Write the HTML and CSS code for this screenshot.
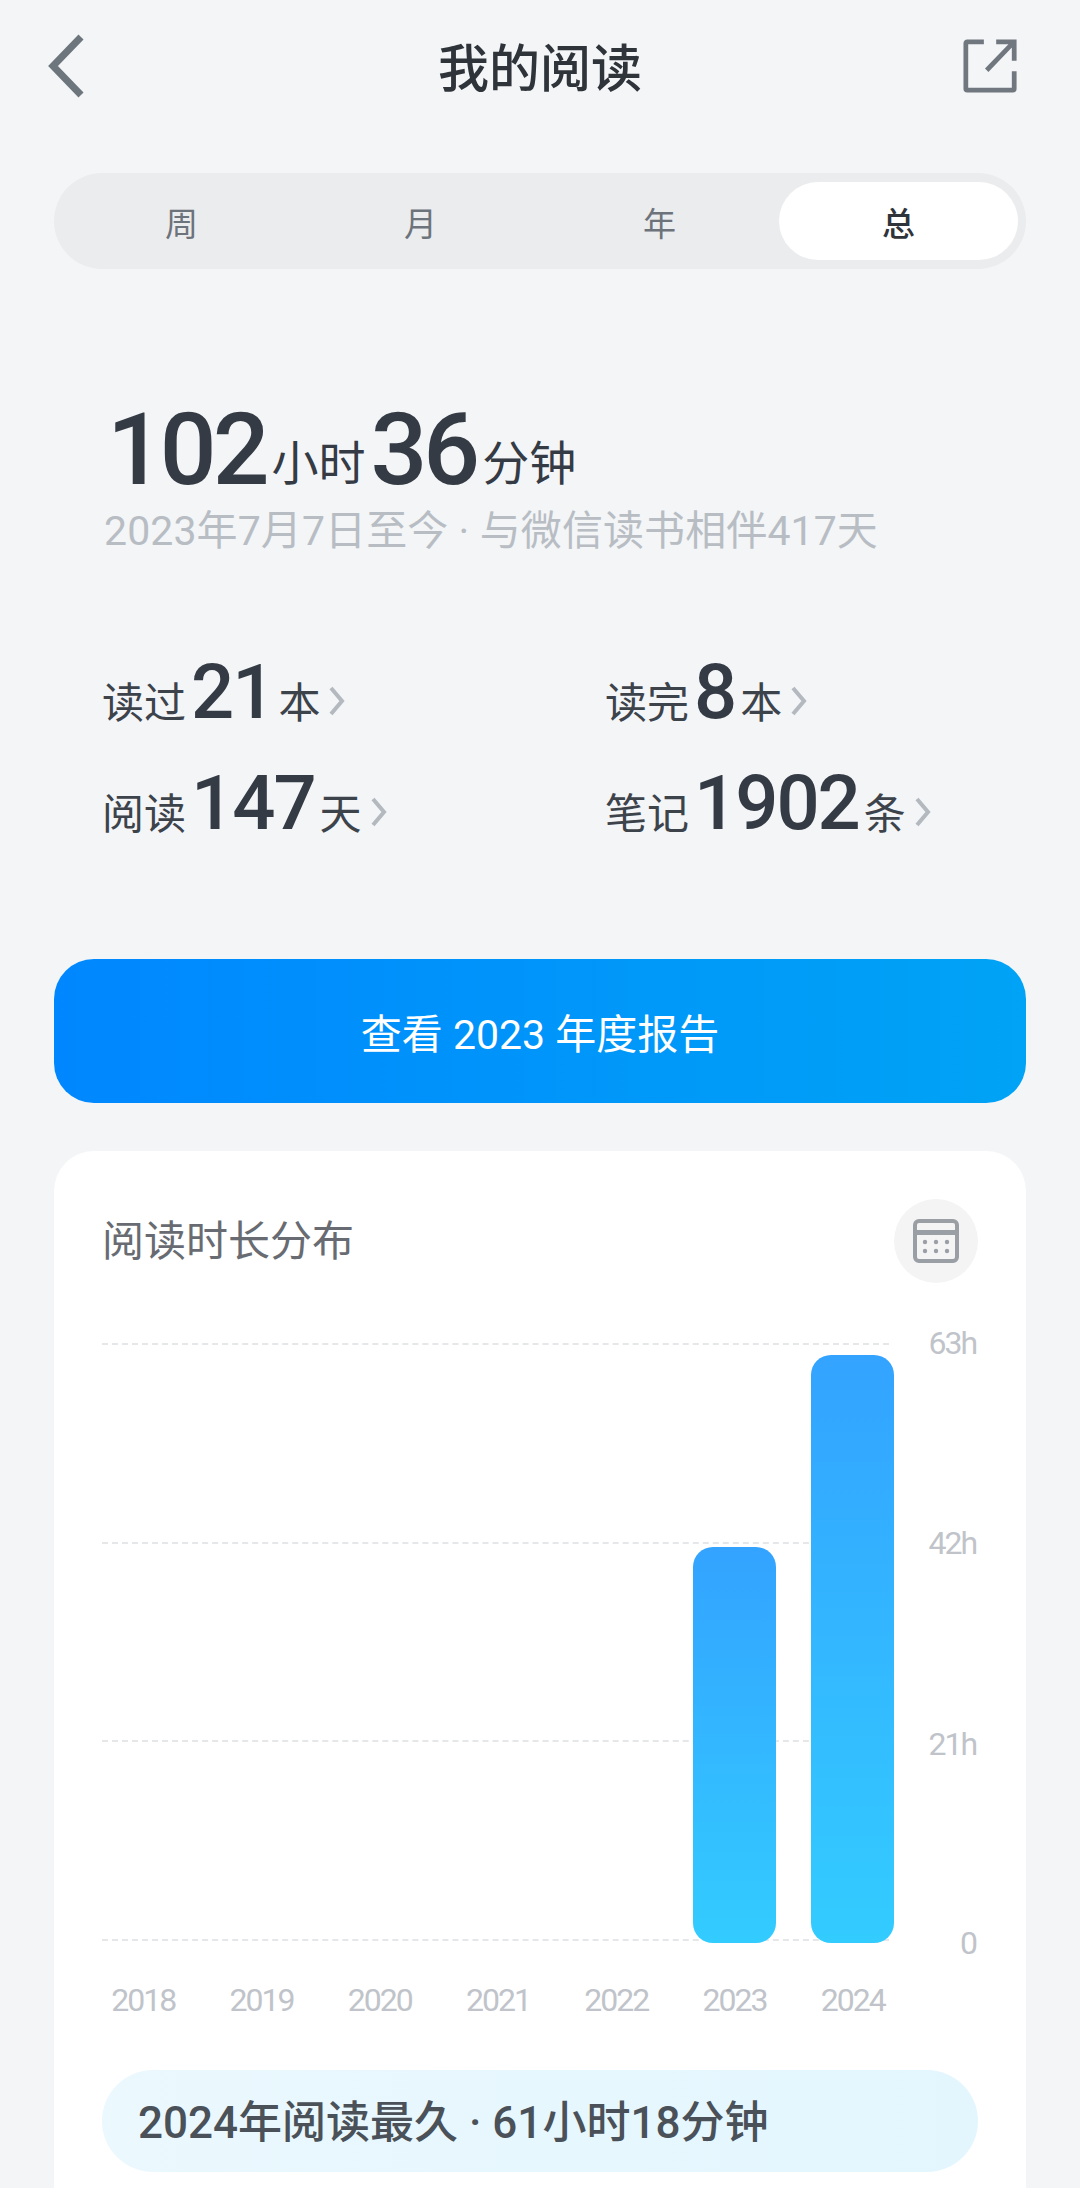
FILE: index.html
```html
<!DOCTYPE html>
<html lang="zh-CN">
<head>
<meta charset="utf-8">
<title>我的阅读</title>
<link rel="stylesheet" href="styles.css">
</head>
<body>
<div class="page">
  <header class="nav">
    <svg class="nav-back" viewBox="0 0 40 64" width="40" height="64"><path d="M34 3 6 32l28 29" fill="none" stroke="#6d757d" stroke-width="7"/></svg>
    <h1 class="nav-title">我的阅读</h1>
    <svg class="nav-share" viewBox="0 0 58 58" width="55" height="55"><path d="M22 4H4.500a1.500 1.500 0 0 0-1.500 1.500v48a1.500 1.500 0 0 0 1.500 1.500h48a1.500 1.500 0 0 0 1.500-1.500V35M35 4h19v20M25 34 52 6" fill="none" stroke="#70777f" stroke-width="5"/></svg>
  </header>

  <nav class="tabs">
    <div class="tab">周</div>
    <div class="tab">月</div>
    <div class="tab">年</div>
    <div class="tab tab-active">总</div>
  </nav>

  <section class="hero">
    <div class="time"><span class="time-num">102</span><span class="time-unit">小时</span><span class="time-num time-num-second">36</span><span class="time-unit">分钟</span></div>
    <p class="since">2023年7月7日至今 · 与微信读书相伴417天</p>
  </section>

  <section class="stats">
    <div class="stat"><span class="stat-label">读过</span><span class="stat-num">21</span><span class="stat-unit">本</span><svg class="stat-arrow" viewBox="0 0 18 30" width="18" height="30"><path d="M3 2l11 13L3 28" fill="none" stroke="#b4b9c0" stroke-width="4"/></svg></div>
    <div class="stat"><span class="stat-label">读完</span><span class="stat-num">8</span><span class="stat-unit">本</span><svg class="stat-arrow" viewBox="0 0 18 30" width="18" height="30"><path d="M3 2l11 13L3 28" fill="none" stroke="#b4b9c0" stroke-width="4"/></svg></div>
    <div class="stat"><span class="stat-label">阅读</span><span class="stat-num">147</span><span class="stat-unit">天</span><svg class="stat-arrow" viewBox="0 0 18 30" width="18" height="30"><path d="M3 2l11 13L3 28" fill="none" stroke="#b4b9c0" stroke-width="4"/></svg></div>
    <div class="stat"><span class="stat-label">笔记</span><span class="stat-num">1902</span><span class="stat-unit">条</span><svg class="stat-arrow" viewBox="0 0 18 30" width="18" height="30"><path d="M3 2l11 13L3 28" fill="none" stroke="#b4b9c0" stroke-width="4"/></svg></div>
  </section>

  <button class="report">查看 2023 年度报告</button>

  <section class="card">
    <div class="card-head">
      <h2 class="card-title">阅读时长分布</h2>
      <div class="cal">
        <svg viewBox="0 0 46 44" width="46" height="44">
          <rect x="2" y="2" width="42" height="40" rx="4" fill="none" stroke="#9a9fa6" stroke-width="4"/>
          <rect x="2" y="11" width="42" height="5" fill="#9a9fa6"/>
          <g fill="#9a9fa6"><circle cx="12" cy="23" r="2.200"/><circle cx="23" cy="23" r="2.200"/><circle cx="34" cy="23" r="2.200"/><circle cx="12" cy="32" r="2.200"/><circle cx="23" cy="32" r="2.200"/><circle cx="34" cy="32" r="2.200"/></g>
        </svg>
      </div>
    </div>

    <div class="chart">
      <div class="grid">
        <div class="grid-row"><i class="grid-line"></i><span class="grid-val">63h</span></div>
        <div class="grid-row"><i class="grid-line"></i><span class="grid-val">42h</span></div>
        <div class="grid-row"><i class="grid-line"></i><span class="grid-val">21h</span></div>
        <div class="grid-row"><i class="grid-line"></i><span class="grid-val">0</span></div>
      </div>
      <div class="cols">
        <div class="col"><span class="year">2018</span></div>
        <div class="col"><span class="year">2019</span></div>
        <div class="col"><span class="year">2020</span></div>
        <div class="col"><span class="year">2021</span></div>
        <div class="col"><span class="year">2022</span></div>
        <div class="col"><i class="bar" style="height:396px"></i><span class="year">2023</span></div>
        <div class="col"><i class="bar" style="height:588px"></i><span class="year">2024</span></div>
      </div>
    </div>

    <div class="best">2024年阅读最久 · 61小时18分钟</div>
  </section>
</div>
</body>
</html>
```

FILE: styles.css
```css
* { box-sizing: border-box; }
html, body { margin: 0; padding: 0; }
body {
  background: #f3f5f7;
  font-family: Roboto, "Noto Sans CJK SC", sans-serif;
  color: #353b44;
}
.page { width: 1080px; height: 2188px; overflow: hidden; padding: 0 54px; }

.nav { height: 134px; display: flex; align-items: center; justify-content: space-between; position: relative; margin: 0 -54px; padding: 0 62px 3px 47px; }
.nav-title { position: absolute; left: 0; right: 0; top: 3px; margin: 0; text-align: center; font-size: 51px; line-height: 134px; font-weight: 500; color: #2f343b; }

.tabs { margin-top: 39px; height: 96px; border-radius: 48px; background: #ebecee; padding: 9px 8px; display: flex; }
.tab { flex: 1; height: 78px; border-radius: 39px; text-align: center; font-size: 33px; line-height: 86px; color: #6d737b; }
.tab-active { background: #fff; color: #2f343b; font-weight: 500; }

.hero { padding: 128px 0 0 48px; }
.time { height: 106px; line-height: 106px; padding-left: 5px; white-space: nowrap; }
.time-num { font-size: 100px; font-weight: 500; letter-spacing: -4px; color: #353b44; }
.time-num-second { margin-left: 5px; }
.time-unit { font-size: 47px; margin-left: 6px; color: #353b44; vertical-align: 4px; }
.since { margin: 0; padding-left: 2px; font-size: 41px; letter-spacing: .1px; line-height: 56px; color: #b8bdc4; white-space: nowrap; }

.stats { padding: 93px 0 0 48px; display: grid; grid-template-columns: 503px 1fr; grid-auto-rows: 111px; }
.stat { display: flex; align-items: baseline; height: 111px; line-height: 80px; white-space: nowrap; }
.stat-label, .stat-unit { font-size: 42px; color: #3d434b; }
.stat-num { font-size: 76px; font-weight: 500; letter-spacing: -2px; margin-left: 5px; color: #353b44; }
.stat-unit { margin-left: 5px; }
.stat-arrow { margin-left: 8px; align-self: center; margin-top: -14px; }

.report { display: block; width: 100%; height: 144px; margin-top: 85px; border: 0; border-radius: 40px; background: linear-gradient(90deg, #0087ff, #00a3f5); color: #fff; font-family: inherit; font-size: 41px; font-weight: 400; padding: 0; }

.card { margin-top: 48px; height: 1200px; background: #fff; border-radius: 40px 40px 0 0; padding: 48px 48px 0 48px; }
.card-head { display: flex; justify-content: space-between; align-items: center; height: 84px; }
.card-title { margin: 0 0 8px; font-size: 42px; font-weight: 400; color: #686c72; }
.cal { width: 84px; height: 84px; border-radius: 50%; background: #f4f4f5; display: flex; align-items: center; justify-content: center; }

.chart { position: relative; margin-top: 61px; height: 680px; }
.grid { position: absolute; inset: 0 0 auto 0; height: 596px; }
.grid-row { height: 0; margin-bottom: 198.700px; display: flex; align-items: center; position: relative; }
.grid-line { display: block; width: 787px; border-top: 2px dashed #e6e7e9; }
.grid-val { position: absolute; right: 2px; font-size: 32px; letter-spacing: -2px; color: #c0c4ca; }
.grid-row:nth-child(1) .grid-val { margin-top: -2px; }
.grid-row:nth-child(3) .grid-val,
.grid-row:nth-child(4) .grid-val { margin-top: 6px; }

.cols { position: absolute; left: -18px; top: 0; display: flex; align-items: flex-end; width: 828px; height: 680px; }
.col { flex: 1; display: flex; flex-direction: column; align-items: center; justify-content: flex-end; }
.bar { display: block; width: 83px; border-radius: 20px; background: linear-gradient(180deg, #33a3ff, #33ccff); margin-bottom: 34px; }
.year { height: 46px; margin-bottom: 1px; line-height: 46px; font-size: 32px; letter-spacing: -2px; color: #c0c4ca; }

.best { margin-top: 46px; height: 102px; border-radius: 51px; background: linear-gradient(90deg, #ebf8fe, #e3f6fe); padding-left: 36px; font-size: 44px; line-height: 106px; font-weight: 500; color: #4a5158; white-space: nowrap; }
```
